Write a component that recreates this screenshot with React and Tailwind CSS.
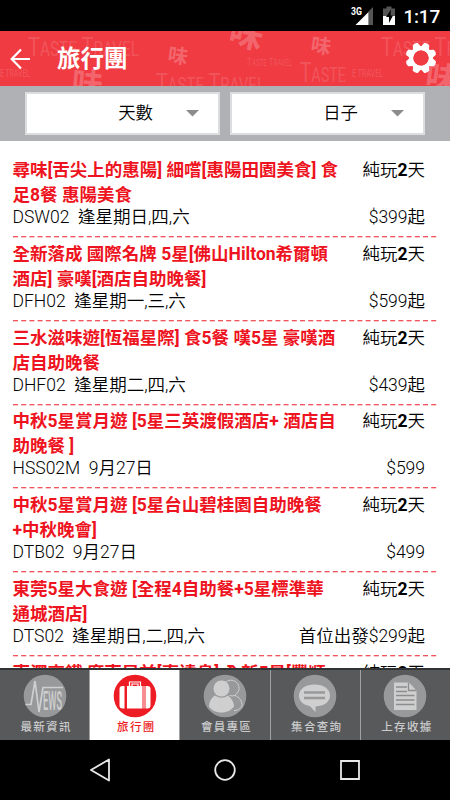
/**
 * Tour list screen - travel packages with filters
 *
 * Header, two dropdown filters, scrolling tour list and bottom tab bar
 */
import React from "react";

const tours = [
  { title: ["尋味[舌尖上的惠陽] 細嚐[惠陽田園美食] 食", "足8餐 惠陽美食"], code: "DSW02", date: "逢星期日,四,六", price: "$399起" },
  { title: ["全新落成 國際名牌 5星[佛山Hilton希爾頓", "酒店] 豪嘆[酒店自助晚餐]"], code: "DFH02", date: "逢星期一,三,六", price: "$599起" },
  { title: ["三水滋味遊[恆福星際] 食5餐 嘆5星 豪嘆酒", "店自助晚餐"], code: "DHF02", date: "逢星期二,四,六", price: "$439起" },
  { title: ["中秋5星賞月遊 [5星三英渡假酒店+ 酒店自", "助晚餐 ]"], code: "HSS02M", date: "9月27日", price: "$599" },
  { title: ["中秋5星賞月遊 [5星台山碧桂園自助晚餐", "+中秋晚會]"], code: "DTB02", date: "9月27日", price: "$499" },
  { title: ["東莞5星大食遊 [全程4自助餐+5星標準華", "通城酒店]"], code: "DTS02", date: "逢星期日,二,四,六", price: "首位出發$299起" },
  { title: ["東深高鐵 廣東早前[直達息] 全新5星[豐順"], code: "", date: "", price: "" },
];

function NewsIcon() {
  return (
    <svg width="44" height="44" viewBox="0 0 44 44">
      <circle cx="22" cy="22" r="21.3" fill="#97999b" />
      <path d="M2.500 30.500h5.500L12 7l4 31 4-24.500h20" fill="none" stroke="#cfcfcf" strokeWidth="1.700" />
      <text x="20" y="36" fontSize="25" fontWeight="500" textLength="19" lengthAdjust="spacingAndGlyphs" fontFamily="Roboto, sans-serif" fill="#cfcfcf">
        EWS
      </text>
    </svg>
  );
}

function SuitcaseIcon() {
  return (
    <svg width="44" height="44" viewBox="0 0 44 44">
      <circle cx="22" cy="22" r="21.3" fill="#ed1c24" />
      <path d="M11.500 12v22.500H9.500a3 3 0 0 1-3-3V15a3 3 0 0 1 3-3zM32.500 12h2a3 3 0 0 1 3 3v16.500a3 3 0 0 1-3 3h-2zM14 12h15.500v22.500H14zM30.500 12h1v22.500h-1z" fill="#fff" />
      <path d="M16.500 12V8h11V12M19 12v-2h6V12" fill="none" stroke="#fff" strokeWidth="1.200" />
    </svg>
  );
}

function MembersIcon() {
  return (
    <svg width="44" height="44" viewBox="0 0 44 44">
      <circle cx="22" cy="22" r="21.3" fill="#97999b" />
      <g fill="none" stroke="#cfcfcf" strokeWidth="1">
        <path d="M23 8c4-3 8.500-2 11.500 1.500 3 4.500 1.500 9-3 12 5 1 8 6 7.500 10.500-2 3.500-5 4.500-8 4.500" />
        <path d="M26.500 21.500q3 .8 5 0" />
      </g>
      <g fill="#cfcfcf">
        <circle cx="18.500" cy="14.500" r="8" />
        <path d="M12 21.500q6.500 4.500 13 0c4 3 6 7 6 11-3.500 4.500-8 6-12.500 6S9 37 6 32.500c0-4 2-8.500 6-11z" />
      </g>
    </svg>
  );
}

function ChatIcon() {
  return (
    <svg width="44" height="44" viewBox="0 0 44 44">
      <circle cx="22" cy="22" r="21.3" fill="#97999b" />
      <path d="M21.500 10.500c9 0 15.500 4.600 15.500 11s-5.500 10.300-14.500 11V38l-5.500-5.800C10 31 6 27 6 21.500c0-6.400 6.500-11 15.500-11z" fill="#cfcfcf" />
      <path d="M11 18.500h21M11 24h21" stroke="#97999b" strokeWidth="2.400" />
    </svg>
  );
}

function ReceiptIcon() {
  return (
    <svg width="44" height="44" viewBox="0 0 44 44">
      <circle cx="22" cy="22" r="21.3" fill="#97999b" />
      <path d="M11 8.500h15l7.500 8V36h-22.500z" fill="#cfcfcf" />
      <path d="M25.500 8.500V16.500h8M13 13h11M13 17.500h11M13 21.500h18.500M13 26h18.500M13 30.500h18.500" fill="none" stroke="#8b8d8f" strokeWidth="1.300" />
    </svg>
  );
}

const tabs = [
  { label: "最新資訊", Icon: NewsIcon },
  { label: "旅行團", Icon: SuitcaseIcon, active: true },
  { label: "會員專區", Icon: MembersIcon },
  { label: "集合查詢", Icon: ChatIcon },
  { label: "上存收據", Icon: ReceiptIcon },
];

function StatusBar() {
  return (
    <div className="h-[31px] shrink-0 bg-black flex justify-end pr-[10px] text-white">
      <svg width="48" height="31" viewBox="0 0 48 31" className="mr-[8px]">
        <text x="4" y="15" fontSize="10" fontWeight="700" textLength="11" lengthAdjust="spacingAndGlyphs" fontFamily="Roboto, sans-serif" fill="#fff">
          3G
        </text>
        <path d="M26 7v18H21.500V11.500z" fill="#555" />
        <path d="M8.500 25 21.500 12v13z" fill="#fff" />
        <path d="M36 8.500H39.500V6.500h5v2H48V16H36z" fill="#555" />
        <path d="M36 16h12v9H36z" fill="#fff" />
        <path d="M44 9.500 39 17h3v6l4-7.500h-2.500z" fill="#000" />
      </svg>
      <span className="text-[19px] leading-[34px] font-medium tracking-[-0.200px]">1:17</span>
    </div>
  );
}

// Brand name in small capitals
function Brand({ x, y, size, width }) {
  return (
    <text x={x} y={y} fontSize={size} textLength={width} lengthAdjust="spacingAndGlyphs">
      T<tspan fontSize={size * 0.76}>ASTE</tspan> T<tspan fontSize={size * 0.76}>RAVEL</tspan>
    </text>
  );
}

// Faded brand lettering behind the header title
function HeaderPattern() {
  return (
    <svg className="absolute inset-0" width="450" height="55" viewBox="0 0 450 55" fill="#fff" fillOpacity="0.150">
      <g fontFamily="Roboto, sans-serif" fontWeight="400">
        <Brand x={28} y={25} size={26} width={111} />
        <text x="0" y="46" fontSize="10" textLength="30" lengthAdjust="spacingAndGlyphs">E TRAVEL</text>
        <Brand x={156} y={61} size={26} width={109} />
        <Brand x={247} y={35} size={11} width={45} />
        <text x="300" y="51" fontSize="27" textLength="46" lengthAdjust="spacingAndGlyphs">
          T<tspan fontSize="20.5">ASTE</tspan>
        </text>
        <text x="352" y="46" fontSize="10" textLength="31" lengthAdjust="spacingAndGlyphs">E TRAVEL</text>
        <Brand x={381} y={25} size={26} width={111} />
      </g>
      <g fontFamily="'Noto Sans CJK TC', sans-serif" fontWeight="700" fillOpacity="0.230">
        <text x="72" y="64" fontSize="31" transform="rotate(5 88 50)">味</text>
        <text x="168" y="32" fontSize="20" transform="rotate(8 178 25)">味</text>
        <text x="229" y="15" fontSize="34" transform="rotate(12 245 5)">味</text>
        <text x="311" y="22" fontSize="20" transform="rotate(8 321 15)">味</text>
        <text x="426" y="58" fontSize="32" transform="rotate(8 440 45)">味</text>
      </g>
    </svg>
  );
}

function Header() {
  return (
    <div className="relative h-[55px] shrink-0 bg-[#f03b43] overflow-hidden">
      <HeaderPattern />
      <div className="relative h-full flex items-center pl-[10px] pr-[13px]">
        <svg width="21" height="22" viewBox="0 0 21 22" className="mt-px" fill="none" stroke="#fff" strokeWidth="2.200">
          <path d="M11 1.500 1.700 11 11 20.500M1.700 11H20" />
        </svg>
        <h1 className="ml-[26px] mt-[2px] text-[23.500px] font-bold leading-[55px] text-white">旅行團</h1>
        <svg className="ml-auto -mt-[2px]" width="32" height="32" viewBox="-16 -16 32 32">
          <g fill="#fff">
            {[0, 45, 90, 135, 180, 225, 270, 315].map((deg) => (
              <path key={deg} transform={`rotate(${deg + 22.5})`} d="M-4.800-9-2.700-15Q0-16.500 2.700-15L4.800-9z" />
            ))}
          </g>
          <circle r="9.700" fill="none" stroke="#fff" strokeWidth="4.200" />
          <circle r="7.600" fill="#f03b43" />
        </svg>
      </div>
    </div>
  );
}

function Filter({ label }) {
  return (
    <button className="h-[43px] w-[195px] bg-white border-2 border-[#dcdddf] flex items-center justify-end pr-[19px] text-[17.400px] font-[350] text-black">
      <span className="mr-[33px]">{label}</span>
      <svg width="13" height="7" viewBox="0 0 13 7">
        <path d="M0 0h13L6.500 6.500z" fill="#8c8c8c" />
      </svg>
    </button>
  );
}

function TourRow({ tour }) {
  return (
    <li className="h-[83.800px] shrink-0">
      <div className="flex justify-between h-[48px] pr-[13px] leading-[25px] text-[17.500px]">
        <h2 className="font-bold text-[#ee1320] whitespace-nowrap">
          {tour.title[0]}
          <br />
          {tour.title[1]}
        </h2>
        <span className="whitespace-nowrap font-[350]">
          純玩<b className="font-bold">2</b>天
        </span>
      </div>
      <div className="flex justify-between h-[30px] pr-[13px] leading-[22px] text-[17.500px] font-[350] whitespace-pre">
        <span>{tour.code + "  " + tour.date}</span>
        <span>{tour.price}</span>
      </div>
      <svg className="block" width="425" height="2" viewBox="0 0 425 2">
        <path d="M0 .7h425" stroke="#ed1c24" strokeWidth="1.100" strokeDasharray="5 3.200" />
      </svg>
    </li>
  );
}

function TabBar() {
  return (
    <nav className="h-[72px] shrink-0 flex bg-[#58595b] border-t-2 border-[#303236]">
      {tabs.map(({ label, Icon, active }) => (
        <div
          key={label}
          className={
            active
              ? "flex-1 flex flex-col items-center pt-[4px] bg-white text-[#ed1c24] border-r border-[#a0a1a3]"
              : "flex-1 flex flex-col items-center pt-[4px] text-[#c9cacb] border-r border-[#a0a1a3] last:border-r-0"
          }
        >
          <Icon />
          <span className="pl-[3px] text-[11.500px] leading-[18px] font-medium tracking-[1.300px] whitespace-nowrap">{label}</span>
        </div>
      ))}
    </nav>
  );
}

function NavBar() {
  return (
    <div className="h-[60px] shrink-0 bg-black flex items-center justify-center">
      <svg width="270" height="30" viewBox="0 0 270 30" fill="none" stroke="#e8e8e8" strokeWidth="1.800">
        <path d="M19 4.500v21L1 15z" strokeLinejoin="round" />
        <circle cx="135" cy="15" r="9.800" />
        <path d="M251 6h18v18h-18z" />
      </svg>
    </div>
  );
}

function App() {
  return (
    <div className="w-[450px] h-[800px] flex flex-col overflow-hidden bg-white text-black font-[Roboto,'Noto_Sans_CJK_TC',sans-serif]">
      <StatusBar />
      <Header />
      <div className="h-[55px] shrink-0 bg-[#b0b1b5] flex items-center justify-center gap-[10px]">
        <Filter label="天數" />
        <Filter label="日子" />
      </div>
      <ul className="flex-1 min-h-0 overflow-hidden flex flex-col pl-[12.500px] pr-[12px] pt-[17px]">
        {tours.map((tour) => (
          <TourRow key={tour.title[0]} tour={tour} />
        ))}
      </ul>
      <TabBar />
      <NavBar />
    </div>
  );
}

export default App;
